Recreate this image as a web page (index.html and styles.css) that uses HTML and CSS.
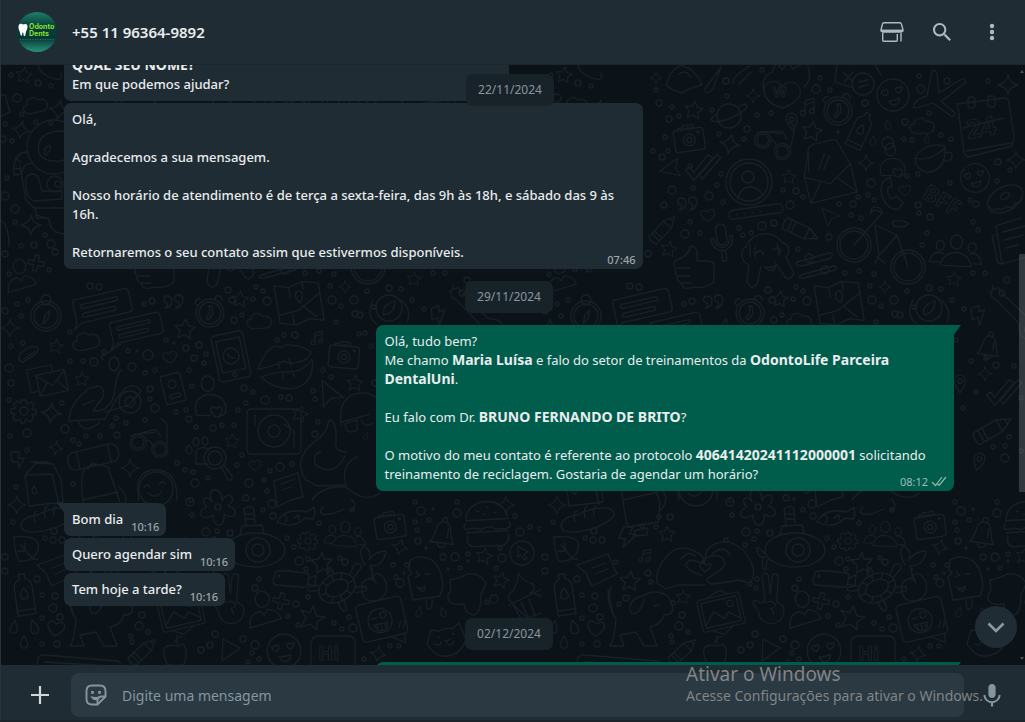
FILE: index.html
```html
<!DOCTYPE html>
<html lang="pt-BR">
<head>
  <meta charset="UTF-8" />
  <meta name="viewport" content="width=device-width, initial-scale=1.0"/>
  <title>WhatsApp</title>
  <link rel="stylesheet" href="styles.css">
</head>
<body>
  <header class="topbar">
    <svg class="avatar" viewBox="0 0 40 40" role="img" aria-label="Odonto Dents">
      <defs>
        <linearGradient id="avatar-bg" x1="0" y1="0" x2="0" y2="1">
          <stop offset="0" stop-color="#1f7f69"/>
          <stop offset=".35" stop-color="#073f3b"/>
          <stop offset=".65" stop-color="#053735"/>
          <stop offset="1" stop-color="#2a9279"/>
        </linearGradient>
      </defs>
      <circle cx="20" cy="20" r="20" fill="url(#avatar-bg)"/>
      <path d="M1.500 14c1-3 3-2.500 4.500-1.500 2-1 4.500-1 4.500 2 0 3-1.500 4-2 8-.3 2-1.800 2-2 0-.2-3-1.300-3-1.300 0-.2 2-1.500 1.500-2-1-.5-3-2-4-1.700-7.500z" fill="#fff"/>
      <text x="12" y="17" class="logo-text">Odonto</text>
      <text x="12" y="24" class="logo-text">Dents</text>
      <path d="M3 27.500h34" stroke="#2b766a" stroke-dasharray="1 1.500"/>
    </svg>
    <h1>+55 11 96364-9892</h1>
    <nav class="actions">
      <button type="button" aria-label="Catálogo">
        <svg viewBox="0 0 24 24" fill="none" stroke="#aebac1" stroke-width="1.400">
          <path d="M4 2.700h16c.9 0 1.200.5 1.400 1.200L23 10c.2 1-.2 1.700-1.200 1.700H2.200C1.200 11.700.8 11 1 10l1.500-6.100c.2-.7.6-1.200 1.500-1.200z"/>
          <path d="M1 10.300h22"/>
          <path d="M2.500 12h19" stroke-dasharray="2 1"/>
          <path d="M2.700 13v7.300c0 .7.300 1 1 1h12.600c.7 0 1-.3 1-1V14M21 13v8.500"/>
        </svg>
      </button>
      <button type="button" aria-label="Pesquisar">
        <svg viewBox="0 0 24 24" fill="#aebac1"><path d="M15.900 14.300H15l-.3-.3c1-1.100 1.600-2.700 1.600-4.300 0-3.700-3-6.700-6.700-6.700S3 6 3 9.700s3 6.700 6.700 6.700c1.600 0 3.200-.6 4.300-1.600l.3.300v.8l5.100 5.100 1.500-1.500-5-5.200zm-6.200 0c-2.600 0-4.600-2.100-4.600-4.600s2.100-4.600 4.600-4.600 4.600 2.100 4.600 4.600-2 4.600-4.600 4.600z"/></svg>
      </button>
      <button type="button" aria-label="Mais opções">
        <svg viewBox="0 0 24 24" fill="#aebac1"><circle cx="12" cy="6" r="2.200"/><circle cx="12" cy="12" r="2.200"/><circle cx="12" cy="18" r="2.200"/></svg>
      </button>
    </nav>
  </header>

  <main class="chat">
    <svg class="wallpaper" aria-hidden="true">
      <defs>
        <g id="star"><path d="M0-10l3 6.500 7 .8-5.200 4.800 1.500 7L0 5.600l-6.300 3.500 1.500-7L-10-2.700l7-.8z"/></g>
        <g id="spark"><path d="M0-10Q1.500-1.500 10 0 1.500 1.500 0 10-1.500 1.500-10 0-1.500-1.500 0-10z"/></g>
        <g id="heart"><path d="M0 8C-15-1-7-11 0-4 7-11 15-1 0 8z"/></g>
        <g id="cloud"><path d="M-12 7c-5-5-2-9 2-9 0-7 10-9 13-3 6-2 11 3 9 8-1 6-7 5-12 5-5 1-9 1-12-1z"/></g>
        <g id="camera"><rect x="-15" y="-9" width="30" height="22" rx="3"/><path d="M-6-9l1-4H5l1 4M-10-9v-2h3M-3-10h6"/><circle cy="2" r="6"/><circle cy="2" r="2.500"/><circle cx="10" cy="-5" r="1"/></g>
        <g id="love"><circle r="16"/><path d="M-7 0c-7-3-4-7-1-5 2-4 6 0 1 5zM6-1c-5-4-2-8 1-5 3-3 6 1-1 5zM-5 5c4 1 8 0 11-1-1 8-9 8-11 1z"/></g>
        <g id="clock"><circle r="14"/><circle r="11"/><path d="M-1-7l1 7-4 5 2 2 5-6-1-8zM-13-8c-4-2-1-7 3-6M5-14c0-5 7-4 7 1"/></g>
        <g id="notes"><path d="M-4 6v-12l9-3V4M-4-2l9-3"/><circle cx="-6" cy="6" r="2.500"/><circle cx="3" cy="4" r="2.500"/></g>
        <g id="quotes"><path d="M-2-1c-1 5-4 7-7 7 3-2 3-4 2-5-5-1-4-7 0-7 3 0 5 2 5 5zM9-2C8 3 5 6 2 6c3-2 3-4 2-6-5-1-4-7 0-7 3 0 5 2 5 5z"/></g>
        <g id="people"><ellipse cy="-10" rx="6" ry="7"/><ellipse cx="-16" cy="-6" rx="4" ry="5"/><ellipse cx="16" cy="-5" rx="4" ry="5"/><path d="M-15 14c2-18 28-18 31 0zM-16 11h-10c1-9 9-12 14-8M18 11h8c-1-9-8-12-12-9"/></g>
        <g id="user"><ellipse cy="-13" rx="7" ry="8"/><path d="M-16 14c0-12 7-15 12-15l4 4 4-5c6 1 11 5 12 11z"/></g>
        <g id="lover"><ellipse cx="-3" cy="-15" rx="6" ry="7"/><path d="M-1 14h-12c-4-12 3-19 12-19 11 0 16 8 14 17-5 4-9 5-11 1-5-6 0-9 3-5 3-4 8 0 3 6"/></g>
        <g id="pencil"><path d="M-18-5h24L18 1 6 7h-24q-3-6 0-12zM-13-5v12M-9-5v12M6-5v12M13-1v4"/></g>
        <g id="gear"><circle r="4"/><path d="M-2-11h4l1 4 4-2 3 3-2 4 4 1v4l-4 1 1 4-3 3-4-3-2 4h-3l-1-4-4 2-3-3 2-4-4-1v-4l4-1-1-4 3-3 4 2z"/></g>
        <g id="bell"><path d="M-12 10c6-6 3-22 12-21 10 0 6 15 12 21zM-4 10c0 6 8 6 8 0M-2-12c0-5 5-5 5 0M5-5v9"/></g>
        <g id="drop"><path d="M0-7C3-2 4 0 4 3c0 5-8 5-8 0 0-3 1-5 4-10z"/></g>
        <g id="pin"><path d="M0 11c-4-7-6-9-6-13 0-9 12-9 12 0 0 4-2 6-6 13z"/><circle cy="-2" r="2.500"/></g>
        <g id="chat"><path d="M-27-12h52q4 0 4 4V8q0 4-4 4h-48l-9 5 4-7v-18q0-4 4-4z"/><rect x="-21" y="-6" width="38" height="4" rx="2"/><rect x="-21" y="3" width="34" height="4" rx="2"/></g>
        <g id="map"><path d="M-23-20l14 4 14-4 16 4v38l-14-4-14 4-16-4zM-9-16v10M5-20v8M-9 12v8M-23 10l20-2 24-14M3 5l11 12"/><path d="M0 1c-7-9-2-12 0-12s7 3 0 12z"/></g>
        <g id="mail"><path d="M-16-11h32v24h-32zM-16-10l16 14 16-14M-16 13l10-13M16 13L6 0M-16 7h-9v-26h28v8"/></g>
        <g id="envelope"><path d="M-26-4l12-30q3-3 7-3h21q4 0 5 4l8 27v32h-53zM-26-4L0 10 27-6M-26 26L-9 5M27 26L9 5M-20-8l5-22M-9-8L2-24M-3-7L7-21"/></g>
        <g id="bolt"><path d="M-5-9h8L1-3h6L-3 10l1-8h-6z"/></g>
        <g id="ticks"><path d="M-14 4l4-3 4 5L7-13l5 3L-5 14zM0 8l3 4L20-11l-4-3z"/></g>
        <g id="plane"><path d="M-11-11L14 0 2 4-3 14z"/></g>
        <g id="goggles"><circle cx="-12" cy="-2" r="9"/><circle cx="12" cy="6" r="9"/><circle cx="-12" cy="-2" r="6.500"/><circle cx="12" cy="6" r="6.500"/><path d="M-4-4q5-1 8 5M-20-9l26-7q5 2 7 8M-16-11l22-2M20 0v-18q0-8-8-10"/></g>
        <g id="mic"><rect x="-5" y="-16" width="10" height="21" rx="5"/><path d="M-11-3c0 18 22 18 22 0h-3c0 14-16 14-16 0zM-2 11v10h4V11"/></g>
        <g id="bottle"><path d="M-3-19h6v5q6 2 6 9v27H-9V-5q0-7 6-9zM-9 17H9"/><path d="M0-5c6 8 4 11 0 11s-6-3 0-11z"/></g>
        <g id="plus"><path d="M-2-8h4v6h6v4H2v6h-4V2h-6v-4h6z"/></g>
        <g id="picture"><rect x="-24" y="-18" width="48" height="36" rx="3"/><rect x="-20" y="-14" width="40" height="28"/><path d="M-20 11L-8-2 2 8l6-6 12 9M-14-18L4-24l8 6M-14 18L-2 25l12-7"/><circle cx="12" cy="-7" r="3.500"/></g>
        <g id="burger"><path d="M-19-4c1-22 37-22 38 0zM-20-1q-3 4 2 5 8-2 12 1 9-5 13 0h11q5-2 2-6M-19 7h38M-18 10q-2 10 6 10h26q6-3 5-10M-9-12h2M0-15h2M7-10h2M-3-9h1"/></g>
        <g id="peace"><path d="M-9 0l-3-27c0-5 7-5 7 0l2 19 2-19c1-5 7-4 7 0L4 1q10 4 8 12-3 13-15 12-12-1-13-13-1-4-6-8c-1-5 4-6 8-2zM-9 2q8-4 12 2-1 4-5 4l3 7"/></g>
        <g id="turtle"><ellipse rx="19" ry="14"/><ellipse rx="12" ry="8"/><path d="M-19 0l7 0M19 0h-7M0-14v6M0 8v6M-11-11l4 5M11-11L7-6M-11 11l4-5M11 11L7 6M-18-6q-9-2-10-5 2-4 12 1M17-7l9-7q8 1 4 6l-11 6M-5 14q-1 10 3 10 3 0 3-10M17 7l10 4-2 4-10-3M-3-14l2-8 4 1v7"/></g>
        <g id="laugh"><rect x="-24" y="-20" width="46" height="38" rx="4"/><path d="M4 18l13 9 1-9M14 11l3-6M18 12l3-6"/><circle cx="-3" r="12"/><circle cx="1" cy="-5" r="3"/><path d="M-11-3l5-1M-10 3h14c-1 10-12 9-14 0zM-7 4v3M-3 4v5M1 4v3"/></g>
        <g id="guitar"><path d="M-22-22l8-3 4 6L20 10q14-1 16 11-7 20-24 9-5-8-2-14L-16-11l-6-4zM-20-27v4M-25-20h4"/><circle cx="20" cy="22" r="5"/></g>
        <g id="bike"><circle cx="-25" cy="10" r="17"/><circle cx="29" cy="32" r="17"/><circle cx="-25" cy="10" r="14"/><circle cx="29" cy="32" r="14"/><path d="M-25 10L3-22q-8-6-12 1M-4-10L18 0 0 21-4-10M18 0l11 32M15-9q12 3 14-3-8-4-16-1zM0 21l-4 7M-2 22l8 6M-8-22q-1-8 9-5l3 6"/></g>
        <g id="phone"><path d="M-9-15c-8 9 2 32 15 28l4-7-7-6-4 3c-4-3-5-8-4-11l4-2-2-9z"/></g>
        <g id="thumb"><path d="M-4-23c5-3 8 3 7 14h12q7 1 5 8v13q-9 7-20 5-12 4-13-4-6-3-3-7-5-3-2-8-4-4 0-8 8-2 13-9zM-16-2h12M-16 6h12M-13 13h10"/></g>
        <g id="saturn"><circle r="12"/><path d="M-12-2c-9 5-7 9 4 7 12-2 30-13 25-16-2-2-5 0-7 2"/></g>
        <g id="pill"><rect x="-27" y="-5" width="54" height="9" rx="4"/><path d="M-20 0h1M-12 0h1M-4 0h1M4 0h1"/></g>
      </defs>
      <pattern id="doodles" width="540" height="600" patternUnits="userSpaceOnUse">
        <g id="doodle-layer" class="doodle" transform="translate(0 -65)">
          <!-- one-off drawings -->
          <path d="M223 92q-4-15 8-20l5-10 5 8 6-8 5 7 13-7q8 16-2 25M223 92c-1-10 12-15 18-5 7-9 20-4 18 7-1 6-11 12-17 14-8-2-17-7-19-16z"/>
          <text x="232" y="97" font-size="14">W</text>
          <path d="M296 65l-2 17 19 6M334 65l6 10M303 73l8 8M312 72l-9 10"/><circle cx="322" cy="84" r="11"/><path d="M318 82l9-2M318 87l9-2"/>
          <path d="M372 107q2-8 14-11l5-25q4-2 5 3l2 19 21-13q5-3 6 2l-20 16-5 3 14 12q0 5-4 3l-18-13-17 5z"/>
          <path d="M416 104l47-6q4 0 5 4l5 35-2 9-44 11-4-4-6-45q-1-4-1-4M422 128l41-10M425 151l45-8"/><rect x="427" y="97" width="7" height="11" rx="3"/><rect x="447" y="96" width="7" height="11" rx="3"/>
          <text x="427" y="139" font-size="26" transform="rotate(-10 427 139)">24</text>
          <path d="M374 158q9-16 30-12c2 17-7 27-20 26-6-2-10-7-10-14zM374 158q13 4 29-9M404 153q8-2 7 3-1 6-8 5"/>
          <text x="380" y="197" font-size="22" transform="rotate(30 380 197)">BFF</text>
          <ellipse cx="464" cy="199" rx="19" ry="12" transform="rotate(-30 464 199)"/><ellipse cx="464" cy="196" rx="5" ry="3" transform="rotate(-30 464 196)"/><path d="M448 206q5 7 9 2 4 4 8-2 6 4 9-3 7 0 7-6"/>
          <circle cx="208" cy="182" r="23"/><circle cx="208" cy="182" r="19"/><circle cx="207" cy="177" r="6"/><path d="M197 198q3-11 12-11t13 9"/>
          <path d="M205 247c6-17 30-17 36-4 9 1 8 9 4 14l8 16q-4 9-9 4l-10-15M204 247c-8 9 1 17 4 18l-2 17q4 9 10 2l4-17M213 255q7-8 10 0M232 250q6-5 8 2M223 267q8 2 12-2-2 10-12 2M209 245v12M214 247v10M236 243l2 12"/>
          <path d="M454 226l26-8M455 226l6 38 24-7M462 232l22-6M464 240l18-5M465 248l12-3M454 235l-3 1 6 27 5 1"/>
          <path d="M256 262l32-9q6 0 2 5l-29 8q-8 0-5-4zM260 275l32-9q6 0 2 4l-31 8q-7 1-3-3z"/><circle cx="268" cy="258" r="4"/><circle cx="284" cy="270" r="4"/>
          <circle cx="388" cy="308" r="13"/><path d="M372 300q-8 16 4 24M400 300q11 9 6 22M383 315q-3-10 11-14 0 12-11 14z"/>
          <path d="M125 85q5-17 16-20 15 6 20 20-16 4-20 8-11-3-16-8zM138 74q7-5 12 3"/><path d="M180 67l-14 19q-4 5 0 7 6-2 7-7z"/><path d="M192 84q0-9 17-18M198 84l12-12"/>
          <circle cx="45" cy="316" r="15"/><circle cx="45" cy="316" r="12"/><circle cx="45" cy="300" r="5"/><path d="M42 324l2-9 5-5-2 9z"/>
          <g transform="rotate(-12 230 356)"><rect x="214" y="333" width="32" height="47" rx="4"/><rect x="218" y="339" width="24" height="32"/><circle cx="230" cy="356" r="8"/><path d="M227 353q0 5 6 6"/><circle cx="230" cy="375" r="2"/></g>
          <path d="M257 369q8-20 17-23 8 3 10-1 15-1 26 7-3 9-13 10-9 3-14-1-12 6-26 8zM260 377q17-6 27-5 16 0 24-13 3 20-13 28-20 6-38-10zM278 362v6M288 358l2 8M282 374v5M292 371l1 6"/>
          <path d="M19 354q9-9 16-7 8 3-13 15-6-1-3-8zM23 359l11-8"/>
          <path d="M68 421q0-18 21-33 16-6 13 9l-10 14q16 1 21-16 2-20 7-25M102 356l18-12M103 360q-5-3-1-5M68 421l36-2 11-19q14-23 25-9l-12 14-24 7M82 405l12-5"/><circle cx="129" cy="402" r="11"/><circle cx="129" cy="402" r="5"/><ellipse cx="113" cy="364" rx="5" ry="7"/><path d="M77 421q6 15 22 1"/>
          <g transform="rotate(-14 172 388)"><rect x="162" y="374" width="20" height="29" rx="2"/><circle cx="172" cy="384" r="4"/><rect x="167" y="394" width="11" height="4" rx="2"/></g>
          <rect x="246" y="409" width="54" height="45" rx="4"/><circle cx="273" cy="431" r="16"/><circle cx="273" cy="431" r="6"/><path d="M283 424l10 7v17M254 415v10"/>
          <path d="M340 425q-4-29 19-32 20-1 24 20M341 422l28-8M344 424q2 12 12 6v-10zM360 420q4 9 12 3M328 420q8 0 7 22-2 9 10 10M328 420q-2 14-15 22-22 18-8 38l11 6 29-1q-6-20 11-28M320 452q-8 0-6 12 18 15 30-8M311 500q11-15 34-13 18 17 34 6M322 507q-8 9 9 7l12-5M350 499q8 8 0 11"/>
          <path d="M10 452h8l-1 6h6l-5 10-1-6h-6z"/><path d="M24 475l11-12 17 1 8 15 2 23-34 4zM24 475l27-1 7 30M33 486q-4 6 0 8 5 0 0-8M30 462h18"/>
          <g transform="rotate(-13 92 458)"><rect x="67" y="448" width="51" height="18" rx="7"/><path d="M77 448v18M109 448v18"/></g>
          <path d="M82 472q8-12 25-5l12 36-2 19-30 5q-9-36-5-55zM87 469q3-9 11-3M82 500l35-8M118 487q13 11 1 24M93 531l13-3v7l-13 1z"/>
          <circle cx="155" cy="489" r="17"/><path d="M143 487q4-4 6 0M158 484q4-4 6 0M147 493q8 7 14-2M138 500q-7-31 19-30 20 2 19 30"/>
          <circle cx="214" cy="458" r="11"/><circle cx="214" cy="458" r="7"/><path d="M221 468l6 12q5 1 4-4l-8-11M195 450q9-5 13 0M195 450v14h12"/><ellipse cx="195" cy="442" rx="3" ry="4"/><ellipse cx="204" cy="441" rx="3" ry="4"/><ellipse cx="188" cy="450" rx="3" ry="4"/>
          <path d="M273 481l24-8 5 24-12 3-14 7zM280 484l14-5M281 490l9-3"/>
          <path d="M211 502c-7-17 11-16 10-1 5-12 17-3 6 5 13 3 7 16-4 8 2 15-12 14-11 1-12 8-18-4-6-8-8-7 0-14 5-5z"/><circle cx="217" cy="507" r="3"/>
          <ellipse cx="254" cy="550" rx="30" ry="17"/><circle cx="257" cy="550" r="12"/><circle cx="257" cy="550" r="6"/><path d="M239 535l2-9 20-1 2 9M245 525l-2-16q7-5 10 0l1 14M244 514h8M244 519h9M224 554q-10-10-8-5 0 9 8 8M222 558q-2 12 3 12l1-10"/>
          <path d="M276 522q8-15 30-10l7-5 1 7-2 5-8-1q-12 12-28 4zM284 515q4 4 0 8M293 518q7-6 5 1"/>
          <path d="M116 583q-2-14 10-27 12-14 31-3 9 5 3 10-12-6-15 1 0 6 16 12M164 564q-2-23 24-22 16 5 22 20 6 15-2 21-5-2-10-3-16 3-28 4-9-3 2-9 20-12 6-19-13-2-16 7M116 583l9 6 12-4 27 0M140 559q8-9 14-3M171 554q12-10 18 1M164 572q-8-7-3-9l4 2q7-4 4 3z"/>
          <path d="M364 565q-8-15-1-19 9 6 5 14 6-9 17-9-2 15-16 15 2 9 6 17-4-9-14 0-2 19 12 18 15-2 12-19-7-13-14-6M371 568v12"/>
          <path d="M409 560l7-3q24-2 26 30l-3 9-27 4-5-23 4-4-3-3zM414 577l5-2-4-3M424 574h5M416 587q6 3 8-1 0 10-8 1M425 600l1 9q6 2 5-10"/>
          <path d="M449 580q11-2 17-6 12-2 19 9-2 7-5 11 0 21-8 21-8-1-9-11-13 2-16-5-1-4 3-8z"/>
          <path d="M508 600q-2-6 4-9 6-11 5-18 6 9 15 11 3 7-3 9 12 1 13 8l-1 12q-9 3-15 5zM508 605l33-16M512 605l8 14M520 602l7 15M528 599l6 16"/>
          <circle cx="521" cy="553" r="12"/><path d="M517 546l10 6-4 2 3 5-3 1-3-5-3 2z"/>
          <path d="M13 537q28-3 24 13-5 13-19 11-5-10-5-24zM20 545l12 14M37 559l-4 0M24 550v-7M24 551h-7"/>
          <path d="M36 565l31-11 9 20-25 12q-4-7-6-13zM51 568l13-5M54 574l12-5"/>
          <path d="M20 526q1-9 16-11 14-8 32-7 9 5 2 11-13 11-36 13-13 1-14-6zM34 522q-3-9 2-11M44 518q-2-9 2-12M53 516q-2-8 2-10"/>
          <path d="M67 590q0 19 8 29-2 22-6 27h14l-4-11 16-3 8 14h13l-7-19q11-2 14-12 15 0 4-19-13-8-25 0-13 2-13 13 1 8 9 2l6-12M113 606l5-1M70 587q-4 9 2 25"/>
          <path d="M163 655q-2-9 7-10 7 2 12-1 6 7 1 20-7 3-17 0zM173 643q3-7 8-6M176 644v-8"/>
          <path d="M222 639l17 9-18 13z"/><path d="M288 571l17 2q4 1 3 4l-2 8q-1 3-5 2l-26-2q-3-1-3-4l2-8q0-3 14-2zM307 579l8-4-1 11-7-2"/><circle cx="278" cy="576" r="1"/>
          <path d="M321 552l2 7 8 0-5 6 3 7-7-3-6 4 0-8-6-5 8-1z"/><path d="M312 606l4 10 8 1-8 5 0 8-7-6-9 3 5-9-5-8 9 3z"/>
          <path d="M310 665v-21q0-8 8-8h29q7 0 7 8v21"/><text x="317" y="660" font-size="20">Hi</text>
          <path d="M430 630l-4 14q9 14 20 12 15-2 19-17l-7-16-7 6q-6-2-13 2zM437 637h2M451 634h2M443 640l3 1 3-2M445 641q4 8 8 0M440 642q-1 5-6 2"/>
          <path d="M36 665l1-7q2-4 7-3l72 6q4 1 3 4M44 662l66 4"/>
          <circle cx="53" cy="147" r="27"/><path d="M38 153q-4-20 20-22 18 0 20 18-2 9-20 12-16 1-20-8zM43 154q1-9 6-8 1 4-4 9zM26 152q-11 0-13 14l0 9 8-1q0-10 10-11M19 166l6 34 8 8 32 0M25 177q7-6 12 0l4 14 20 0v8l-28 2q-9-2-8-24zM34 208l2 10h12q0 16 18 16M36 215l9 3M14 158l6 4M12 168l7 1"/>
          <circle cx="54" cy="184" r="8"/><circle cx="57" cy="184" r="3"/>
          <path d="M38 60q-4 10 10 17 15 6 12-4"/><path d="M0 95l4 0 5 17-9 4M0 220q8 6 8 26"/>
        </g>
      </pattern>
      <rect width="100%" height="100%" fill="url(#doodles)"/>
    </svg>

    <div class="date floating">22/11/2024</div>

    <section class="messages" aria-label="Mensagens">
      <div class="message in first"><b>QUAL SEU NOME?</b><br>Em que podemos ajudar?</div>
      <div class="message in">Olá,<br><br>Agradecemos a sua mensagem.<br><br>Nosso horário de atendimento é de terça a sexta-feira, das 9h às 18h, e sábado das 9 às 16h.<br><br>Retornaremos o seu contato assim que estivermos disponíveis.<time>07:46</time></div>

      <div class="date">29/11/2024</div>

      <div class="message out tail">Olá, tudo bem?<br>Me chamo <b>Maria Luísa</b> e falo do setor de treinamentos da <b>OdontoLife Parceira DentalUni</b>.<br><br>Eu falo com Dr. <b>BRUNO FERNANDO DE BRITO</b>?<br><br>O motivo do meu contato é referente ao protocolo <b>40641420241112000001</b> solicitando treinamento de reciclagem. Gostaria de agendar um horário?<time>08:12
        <svg class="sent" viewBox="0 0 16 11" fill="none" stroke="#8fb8ad" stroke-width="1.200"><path d="M1 6l3.500 3.500L11 1M8 9.500L15 1M6.500 8L8 9.500"/></svg></time></div>

      <div class="message in tail new-day">Bom dia<time>10:16</time></div>
      <div class="message in">Quero agendar sim<time>10:16</time></div>
      <div class="message in">Tem hoje a tarde?<time>10:16</time></div>

      <div class="date">02/12/2024</div>

      <div class="message out tail"></div>
    </section>

    <div class="scrollbar"><div class="thumb"></div></div>
    <button type="button" class="to-bottom" aria-label="Ir para o fim">
      <svg viewBox="0 0 20 20" fill="none" stroke="#8e9a9f" stroke-width="2.600"><path d="M2.500 6.500L10 14l7.500-7.500"/></svg>
    </button>
  </main>

  <footer class="composer">
    <button type="button" class="attach" aria-label="Anexar">
      <svg viewBox="0 0 24 24" stroke="#d1d7db" stroke-width="2.200"><path d="M12 3v18M3 12h18"/></svg>
    </button>
    <div class="field">
      <button type="button" aria-label="Figurinhas">
        <svg viewBox="0 0 24 24" fill="none" stroke="#8696a0" stroke-width="1.900">
          <path d="M8 2.500h8c3.500 0 5.500 2 5.500 5.500v5.500l-8 8H8c-3.500 0-5.500-2-5.500-5.500V8c0-3.500 2-5.500 5.500-5.500z"/>
          <path d="M21.500 13.500H18c-3 0-4.500 1.500-4.500 4.500v3.500"/>
          <path d="M6.500 13c2.500 1.200 6 1.400 10 .6-2 .8-3 1.800-3.400 3.600-3.200.3-5.600-1.200-6.600-4.200z" fill="#8696a0" stroke="none"/>
          <circle cx="8.500" cy="9.300" r=".7"/><circle cx="15.500" cy="9.300" r=".7"/>
        </svg>
      </button>
      <input type="text" placeholder="Digite uma mensagem" aria-label="Digite uma mensagem">
    </div>
    <button type="button" class="record" aria-label="Gravar áudio">
      <svg viewBox="0 0 24 24" fill="#8696a0"><path d="M12 15c2 0 3.600-1.500 3.600-3.500V4.500C15.600 2.500 14 1 12 1S8.400 2.500 8.400 4.500v7C8.400 13.500 10 15 12 15z"/><path d="M18.500 12c0 3.600-3 6.200-6.500 6.200S5.500 15.600 5.500 12h-2c0 4.200 3.300 7.400 7.400 8V23.500h2.200V20c4.100-.6 7.400-3.800 7.400-8z"/></svg>
    </button>
  </footer>

  <aside class="activation">
    <strong>Ativar o Windows</strong>
    <span>Acesse Configurações para ativar o Windows.</span>
  </aside>

  <script>
    const layer = document.getElementById("doodle-layer");
    const svgNS = "http://www.w3.org/2000/svg";

    // name, x, y, scale, rotation
    const doodles = [
      ["spark", 115, 78, .6, 0], ["spark", 212, 96, .7, 0], ["love", 352, 95, 1, -8], ["spark", 467, 85, 1, 0],
      ["clock", 297, 111, 1, 0], ["saturn", 188, 116, 1, 0], ["star", 153, 110, .9, 8], ["notes", 268, 107, 1, 0],
      ["pin", 251, 121, .9, -8], ["star", 271, 131, 1, 10], ["bottle", 320, 129, .9, 25], ["camera", 148, 138, 1, -8],
      ["spark", 189, 144, 1, 10], ["goggles", 232, 144, .9, 12], ["envelope", 287, 175, .9, -14], ["cloud", 382, 126, .9, 0],
      ["spark", 475, 160, .9, 0], ["love", 434, 178, .9, -8], ["spark", 325, 163, .8, 0], ["lover", 352, 163, .9, 0],
      ["star", 248, 177, .7, 5], ["ticks", 159, 167, 1, 5], ["plane", 131, 168, .8, -60], ["phone", 352, 196, 1, 0],
      ["heart", 364, 190, .7, -10], ["quotes", 147, 204, 1, 0], ["heart", 167, 215, .8, -8], ["pill", 215, 212, 1, -8],
      ["pencil", 122, 228, .9, -47], ["pencil", 261, 230, 1, 25], ["plane", 289, 216, .7, 0], ["bike", 338, 235, 1, 0],
      ["people", 415, 252, 1, 3], ["mic", 181, 240, 1, -8], ["star", 128, 249, .8, 10], ["thumb", 153, 270, 1, 0],
      ["star", 413, 279, .7, 5], ["guitar", 470, 310, .9, 0], ["map", 299, 302, 1, -9], ["clock", 209, 313, 1, 0],
      ["quotes", 173, 302, 1, 0], ["star", 239, 299, .8, 5], ["cloud", 259, 321, .9, 0], ["spark", 344, 287, .6, 0],
      ["bolt", 438, 315, 1, -20], ["chat", 101, 306, 1, -13], ["chat", 135, 328, .9, -13], ["star", 184, 329, 1, 5],
      ["notes", 317, 338, .8, 0], ["camera", 343, 355, 1, 5], ["plane", 329, 394, 1, 15], ["star", 354, 383, .8, 5],
      ["spark", 9, 328, .9, 0], ["cloud", 86, 341, 1, -10], ["star", 55, 346, .7, 10], ["mail", 51, 382, .9, -12],
      ["star", 81, 379, .7, 0], ["gear", 23, 411, 1, 0], ["spark", 50, 413, 1, 5], ["heart", 169, 357, .8, -12],
      ["lover", 210, 400, 1.1, 0], ["star", 299, 414, .8, 15], ["goggles", 148, 444, .9, 0], ["spark", 55, 448, .7, 10],
      ["spark", 129, 468, .9, 0], ["star", 231, 441, .7, 5], ["heart", 254, 465, .7, -8], ["gear", 307, 541, .8, 0],
      ["people", 344, 535, .8, 3], ["camera", 389, 525, 1, -8], ["bell", 442, 533, 1, 8], ["burger", 486, 524, 1.1, -3],
      ["star", 483, 556, .8, 10], ["turtle", 336, 588, 1, -25], ["spark", 399, 547, .8, 15], ["peace", 232, 601, .9, 0],
      ["picture", 180, 612, .9, -13], ["star", 142, 597, .7, 5], ["love", 283, 651, 1.050, -5], ["laugh", 382, 620, 1, -13],
      ["spark", 377, 654, .8, 10], ["user", 263, 612, 1, -8], ["plus", 280, 601, 1, 12], ["drop", 418, 612, .7, 15],
      ["drop", 442, 612, .7, -20], ["drop", 13, 627, .9, 10], ["drop", 33, 627, 1, -15], ["drop", 23, 642, .9, 0],
      ["heart", 55, 628, 1, 8], ["pencil", 142, 650, .9, -43], ["bottle", 23, 593, 1, -8], ["star", 126, 534, .8, 0],
      ["star", 89, 581, 1, 5], ["notes", 105, 556, .8, 8], ["bolt", 87, 537, 1.100, 8], ["star", 500, 580, .8, 15],
      ["spark", 16, 505, .9, 0], ["spark", 505, 505, .9, 0], ["star", 23, 75, .8, 8], ["cloud", 35, 105, .9, -10],
      ["spark", 58, 110, 1, 10], ["spark", 20, 130, .9, 10], ["spark", 30, 225, 1, 0], ["user", 20, 278, .9, -8],
      ["plus", 35, 263, 1, 10], ["drop", 347, 125, .7, -10], ["drop", 332, 141, .7, 5], ["drop", 386, 139, .6, 0],
      ["bell", 448, 346, .9, 8], ["spark", 444, 374, .7, 0], ["pin", 419, 383, .9, 0],
      ["ticks", 460, 392, 1, 5], ["pin", 438, 461, .9, 15], ["drop", 365, 436, .5, 30], ["pencil", 452, 428, 1.100, -30]
    ];

    doodles.forEach(([name, x, y, scale, angle]) => {
      const use = document.createElementNS(svgNS, "use");
      use.setAttribute("href", "#" + name);
      use.setAttribute("transform", `translate(${x} ${y}) rotate(${angle}) scale(${scale})`);
      layer.appendChild(use);
    });

    // small bubbles between the drawings: x, y, radius
    const bubbles = [
      [221,70,2],[185,81,3],[279,78,2],[275,89,4],[289,90,2],[380,89,4],[378,76,2],[406,81,3],[447,81,2],[186,96,2],[115,90,2],
      [118,103,3],[131,107,2],[171,110,2],[216,115,2],[230,113,2],[128,119,3],[138,116,2],[206,129,3],[178,134,2],[203,139,2],
      [297,132,1],[324,103,3],[364,122,3],[388,113,2],[400,135,2],[410,139,2],[363,139,2],[371,140,2],[347,143,6],[124,137,2],
      [127,151,2],[112,151,2],[121,157,3],[149,166,2],[180,174,2],[176,185,2],[131,190,4],[152,188,2],[168,196,4],[182,202,2],
      [242,190,2],[255,191,3],[262,197,2],[249,205,4],[123,205,3],[149,222,2],[144,234,4],[159,233,2],[198,228,2],[202,235,2],
      [210,233,2],[221,226,4],[233,223,3],[298,204,2],[312,204,3],[317,197,2],[327,195,2],[333,200,2],[330,183,4],[366,176,2],
      [377,174,2],[377,205,3],[378,213,2],[389,217,3],[386,233,2],[381,245,2],[409,183,2],[429,200,2],[435,204,3],[432,222,2],
      [437,230,2],[457,162,3],[456,181,2],[469,170,2],[288,237,3],[310,215,2],[320,218,2],[257,249,2],[107,254,3],[318,271,2],
      [304,273,2],[333,274,2],[366,291,2],[388,288,3],[400,289,2],[432,273,2],[444,273,2],[466,280,3],[461,293,3],[411,300,2],
      [423,309,2],[227,290,3],[255,287,2],[262,291,2],[266,301,4],[252,299,2],[231,300,3],[151,301,3],[143,304,2],[331,300,4],
      [353,300,4],[340,306,2],[329,286,2],[373,307,2],[354,314,3],[335,322,2],[233,320,3],[241,315,2],[16,304,2],[27,300,2],
      [20,316,2],[4,311,3],[89,286,3],[98,287,3],[359,315,3],[358,334,2],[364,333,2],[370,346,2],[10,346,2],[22,343,2],
      [69,332,2],[103,352,2],[93,362,4],[82,361,2],[69,361,2],[127,351,2],[136,351,1],[147,355,5],[131,367,4],[144,373,2],
      [154,370,2],[165,340,2],[173,343,1],[185,348,3],[198,345,3],[205,354,2],[193,358,3],[203,363,2],[188,370,2],[191,386,2],
      [8,368,4],[10,383,3],[8,400,2],[61,403,2],[149,389,3],[149,399,2],[154,408,4],[175,412,2],[185,410,2],[188,419,3],
      [195,427,2],[212,428,3],[221,425,2],[233,425,2],[237,410,2],[245,403,2],[243,388,3],[252,392,2],[264,400,4],[280,397,2],
      [288,398,3],[276,340,2],[283,335,2],[294,335,3],[322,370,2],[330,377,2],[374,383,3],[312,391,2],[314,399,2],[317,422,2],
      [314,434,3],[26,433,4],[64,429,4],[9,436,2],[72,440,2],[78,444,2],[26,450,2],[85,436,2],[99,436,2],[116,435,3],
      [125,423,2],[115,418,2],[144,420,2],[111,426,2],[176,463,2],[184,470,2],[192,472,2],[194,483,4],[207,478,2],[190,500,2],
      [236,465,2],[241,455,2],[248,483,4],[263,480,2],[269,471,2],[279,467,4],[291,464,2],[266,491,2],[72,484,2],[15,487,2],
      [189,502,4],[191,515,2],[245,498,3],[253,499,1],[262,510,2],[272,516,3],[271,504,4],[351,510,2],[318,523,2],[286,538,2],
      [293,547,2],[298,561,4],[307,559,2],[305,569,2],[339,558,2],[344,562,3],[205,532,4],[213,539,2],[216,531,2],[229,533,3],
      [204,545,2],[185,540,2],[414,502,2],[420,511,4],[432,509,1],[456,502,2],[456,513,4],[414,522,2],[416,530,2],
      [417,541,3],[428,520,2],[425,548,1],[442,557,3],[454,557,4],[467,554,2],[459,568,2],[447,569,1],[392,565,2],[406,565,2],
      [403,573,1],[395,577,2],[399,583,4],[467,561,1],[495,568,2],[499,548,2],[501,558,4],[519,532,4],[529,527,2],[539,529,2],
      [514,516,2],[493,599,4],[486,602,2],[4,571,3],[4,557,3],[12,522,2],[53,531,3],[52,540,3],[61,540,3],[44,538,2],
      [75,562,2],[107,573,3],[110,582,2],[118,517,2],[129,517,3],[101,526,2],[115,527,2],[36,579,3],[54,596,3],[41,595,2],
      [52,608,4],[59,617,3],[41,618,2],[41,644,2],[56,644,3],[85,598,3],[78,604,2],[132,603,2],[141,615,3],[138,626,4],[147,632,2],
      [130,636,2],[131,642,2],[214,634,3],[200,650,3],[209,645,3],[242,639,3],[254,645,4],[251,653,2],[247,662,2],[258,659,2],
      [209,584,2],[215,588,2],[216,579,2],[254,588,3],[258,579,2],[295,604,3],[307,597,2],[287,616,2],[297,625,2],[333,623,2],
      [341,629,2],[348,617,2],[352,628,4],[363,659,2],[389,646,2],[398,646,2],[37,83,3],[50,86,2],[10,75,2],[16,98,4],[21,114,2],
      [35,122,2],[50,123,2],[4,124,2],[2,139,3],[11,141,2],[6,178,2],[4,196,4],[14,209,4],[14,222,2],[44,235,2],[33,245,3],
      [50,244,4],[20,246,2],[54,252,3],[4,254,3],[48,270,2],[8,274,2],[415,340,2],[430,361,2],[445,358,2],[455,365,3],[473,366,2],
      [435,392,2],[422,408,2],[468,437,2],[452,447,2],[464,446,2],[464,458,4],[480,398,2],[480,451,2]
    ];

    bubbles.forEach(([x, y, r]) => {
      const c = document.createElementNS(svgNS, "circle");
      c.setAttribute("cx", x);
      c.setAttribute("cy", y);
      c.setAttribute("r", r);
      layer.appendChild(c);
    });
  </script>
</body>
</html>
```
FILE: styles.css
```css
* {
  box-sizing: border-box;
  margin: 0;
  padding: 0;
}
html, body {
  height: 100%;
}
body {
  display: flex;
  flex-direction: column;
  overflow: hidden;
  border-left: 1px solid #26333a;
  border-bottom: 2px solid #1a242a;
  background: #0b1218;
  color: #e9edef;
  font-family: "Segoe UI", "Noto Sans", sans-serif;
  font-size: 13px;
}
button {
  display: flex;
  align-items: center;
  justify-content: center;
  border: none;
  background: none;
  cursor: pointer;
}
svg {
  display: block;
}

/* header */
.topbar {
  display: flex;
  align-items: center;
  gap: 15px;
  flex: none;
  height: 65px;
  padding: 0 21px 0 16px;
  background: #202c33;
  border-bottom: 1px solid #1c262d;
}
.avatar {
  width: 40px;
  height: 40px;
}
.logo-text {
  font: bold 7px "Inter", sans-serif;
  fill: #8be02b;
}
.topbar h1 {
  flex: 1;
  font-size: 15px;
  font-weight: 600;
}
.actions {
  display: flex;
  gap: 26px;
}
.actions svg, .composer svg {
  width: 24px;
  height: 24px;
}

/* conversation */
.chat {
  position: relative;
  flex: 1;
  min-height: 0;
  overflow: hidden;
}
.wallpaper {
  position: absolute;
  inset: 0;
  width: 100%;
  height: 100%;
}
.doodle {
  fill: none;
  stroke: #172027;
  stroke-width: 1.3;
  stroke-linecap: round;
  stroke-linejoin: round;
}
.doodle text {
  font-family: "Open Sans", sans-serif;
  font-weight: bold;
  stroke-width: 1;
}
.messages {
  position: relative;
  display: flex;
  flex-direction: column;
  align-items: flex-start;
  gap: 2px;
  margin-top: -16px;
  padding: 0 71px 0 63px;
}
.message {
  position: relative;
  max-width: 65%;
  min-height: 33px;
  padding: 7px 7px 7px 8px;
  border-radius: 7px;
  font-weight: 500;
  line-height: 19px;
}
.message.in {
  background: #202c33;
}
.message.out {
  align-self: flex-end;
  width: 65%;
  padding-left: 9px;
  background: #005c4b;
  font-weight: 400;
}
.message.first {
  width: 50%;
}
.message.in.tail {
  border-top-left-radius: 0;
}
.message.out.tail {
  border-top-right-radius: 0;
}
.message.tail::before {
  content: "";
  position: absolute;
  top: 0;
  width: 8px;
  height: 11px;
}
.message.in.tail::before {
  left: -7px;
  background: #202c33;
  clip-path: polygon(0 0, 100% 0, 100% 100%);
}
.message.out.tail::before {
  right: -7px;
  background: #005c4b;
  clip-path: polygon(0 0, 100% 0, 0 100%);
}
.message b {
  font-size: 14px;
  font-weight: 700;
  line-height: 1;
}
.message time {
  display: flex;
  align-items: center;
  gap: 3px;
  float: right;
  margin: 9px 0 -5px 8px;
  color: #9da6aa;
  font-size: 11px;
  line-height: 15px;
}
.message.out time {
  color: #99beb7;
}
.sent {
  width: 16px;
  height: 11px;
}
.new-day {
  margin-top: 10px;
}
.date {
  align-self: center;
  margin: 10px 0;
  padding: 6px 12px;
  border-radius: 7px;
  background: #182229;
  color: #8696a0;
  font-size: 12px;
  line-height: 20px;
}
.date.floating {
  position: absolute;
  z-index: 1;
  top: 9px;
  left: 0;
  right: 6px;
  width: fit-content;
  margin: 0 auto;
}
.scrollbar {
  position: absolute;
  top: 0;
  right: 0;
  bottom: 0;
  display: flex;
  flex-direction: column;
  justify-content: space-between;
  width: 6px;
}
.scrollbar::before, .scrollbar::after {
  content: "";
  margin: 5px 1px;
  border: 2px solid transparent;
  border-top: none;
  border-bottom: 3px solid #4a5257;
}
.scrollbar::after {
  border-bottom: none;
  border-top: 3px solid #4a5257;
}
.thumb {
  position: absolute;
  top: 189px;
  width: 100%;
  height: 238px;
  background: rgba(255, 255, 255, 0.16);
}
.to-bottom {
  position: absolute;
  right: 8px;
  bottom: 17px;
  width: 42px;
  height: 42px;
  border-radius: 50%;
  background: #202c33;
}
.to-bottom svg {
  width: 20px;
  height: 20px;
}

/* composer */
.composer {
  display: flex;
  align-items: center;
  flex: none;
  height: 55px;
  padding: 5px 21px 0 27px;
  background: #202c33;
}
.field {
  display: flex;
  align-items: center;
  gap: 14px;
  flex: 1;
  height: 44px;
  margin: 0 16px 0 19px;
  padding: 0 13px;
  border-radius: 8px;
  background: #2a3942;
}
.field input {
  flex: 1;
  min-width: 0;
  border: none;
  outline: none;
  background: none;
  color: #d1d7db;
  font-family: inherit;
  font-size: 14px;
}
.field input::placeholder {
  color: #8696a0;
}

/* system watermark, painted over the whole window */
.activation {
  position: absolute;
  right: 42px;
  bottom: 15px;
  display: flex;
  flex-direction: column;
  color: rgba(160, 160, 160, 0.75);
  font-size: 14px;
  line-height: 22px;
  white-space: nowrap;
  pointer-events: none;
}
.activation strong {
  font-size: 19px;
  font-weight: 400;
}
```
